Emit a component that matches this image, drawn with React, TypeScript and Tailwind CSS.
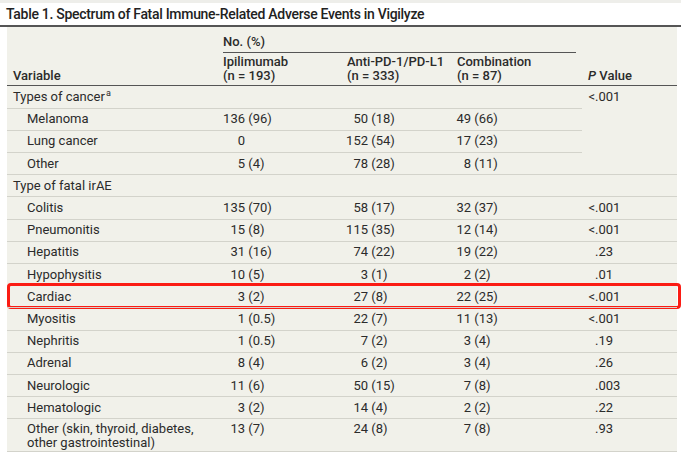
import React from "react";

type Row = {
  label: React.ReactNode;
  indent?: boolean;
  vals?: [string, string, string];
  p?: string;
  noPBorder?: boolean;
  highlight?: boolean;
  tall?: boolean;
};

const rows: Row[] = [
  {
    label: (
      <>
        Types of cancer<sup className="text-[9px] ml-[1px]">a</sup>
      </>
    ),
    p: "<.001",
  },
  { label: "Melanoma", indent: true, vals: ["136 (96)", "50 (18)", "49 (66)"], noPBorder: true },
  { label: "Lung cancer", indent: true, vals: ["0", "152 (54)", "17 (23)"], noPBorder: true },
  { label: "Other", indent: true, vals: ["5 (4)", "78 (28)", "8 (11)"], noPBorder: true },
  { label: "Type of fatal irAE" },
  { label: "Colitis", indent: true, vals: ["135 (70)", "58 (17)", "32 (37)"], p: "<.001" },
  { label: "Pneumonitis", indent: true, vals: ["15 (8)", "115 (35)", "12 (14)"], p: "<.001" },
  { label: "Hepatitis", indent: true, vals: ["31 (16)", "74 (22)", "19 (22)"], p: ".23" },
  { label: "Hypophysitis", indent: true, vals: ["10 (5)", "3 (1)", "2 (2)"], p: ".01" },
  { label: "Cardiac", indent: true, vals: ["3 (2)", "27 (8)", "22 (25)"], p: "<.001", highlight: true },
  { label: "Myositis", indent: true, vals: ["1 (0.5)", "22 (7)", "11 (13)"], p: "<.001" },
  { label: "Nephritis", indent: true, vals: ["1 (0.5)", "7 (2)", "3 (4)"], p: ".19" },
  { label: "Adrenal", indent: true, vals: ["8 (4)", "6 (2)", "3 (4)"], p: ".26" },
  { label: "Neurologic", indent: true, vals: ["11 (6)", "50 (15)", "7 (8)"], p: ".003" },
  { label: "Hematologic", indent: true, vals: ["3 (2)", "14 (4)", "2 (2)"], p: ".22" },
  {
    label: (
      <>
        Other (skin, thyroid, diabetes,
        <br />
        other gastrointestinal)
      </>
    ),
    indent: true,
    vals: ["13 (7)", "24 (8)", "7 (8)"],
    p: ".93",
    tall: true,
  },
];

const numW = ["w-[28px]", "w-[27px]", "w-[20px]"];

function Num({ v, i }: { v: string; i: number }) {
  const idx = v.indexOf(" ");
  const n = idx === -1 ? v : v.slice(0, idx);
  const rest = idx === -1 ? "" : v.slice(idx);
  return (
    <span className="flex whitespace-pre">
      <span className={`${numW[i]} text-right`}>{n}</span>
      <span>{rest}</span>
    </span>
  );
}

function PVal({ v }: { v: string }) {
  const idx = v.indexOf(".");
  return (
    <span className="flex whitespace-pre">
      <span className="w-[13px] text-right">{v.slice(0, idx)}</span>
      <span>{v.slice(idx)}</span>
    </span>
  );
}

const grid = "grid grid-cols-[210px_124px_110px_131px_95px]";

export default function App() {
  return (
    <div
      className="w-[681px] h-[456px] bg-white text-[#2b2b2b] overflow-hidden"
      style={{ fontFamily: "Roboto, 'Liberation Sans', sans-serif" }}
    >
      <div className="h-[3px] bg-[#eeeeea]" />
      <div className="h-[22px] pl-[6px] flex items-center text-[14px] font-medium text-[#222222] tracking-[-0.3px]">
        Table 1. Spectrum of Fatal Immune-Related Adverse Events in Vigilyze
      </div>
      <div className="h-[1.5px] bg-[#555555]" />
      <div className="ml-[7px] w-[670px] bg-[#f1f1ea] text-[13px] leading-[14px]">
        {/* header */}
        <div className={`${grid} grid-rows-[26px_32px] font-medium border-b border-[#555555]`}>
          <div className="row-span-2 self-end pl-[6px] pb-[2px]">Variable</div>
          <div className="col-span-3 mx-[6px] border-b border-[#555555] pt-[8px]">No. (%)</div>
          <div className="row-span-2 col-start-5 row-start-1 self-end pl-[6px] pb-[2px]">
            <span className="italic">P</span> Value
          </div>
          <div className="pl-[6px] pt-[2px]">
            Ipilimumab
            <br />
            (n = 193)
          </div>
          <div className="pl-[6px] pt-[2px]">
            Anti-PD-1/PD-L1
            <br />
            (n = 333)
          </div>
          <div className="pl-[6px] pt-[2px]">
            Combination
            <br />
            (n = 87)
          </div>
        </div>
        {/* body */}
        {rows.map((r, ri) => {
          const bt = ri === 0 ? "" : "border-t border-[#d3d3cb]";
          const align = r.tall ? "items-start pt-[3px]" : "items-center";
          return (
            <div
              key={ri}
              className={`${grid} relative ${r.tall ? "h-[33.5px] border-b border-[#d3d3cb]" : "h-[22.2px]"}`}
            >
              <div className={`${bt} flex ${align} ${r.indent ? "pl-[20px]" : "pl-[6px]"}`}>
                <span>{r.label}</span>
              </div>
              {[0, 1, 2].map((i) => (
                <div key={i} className={`${bt} flex ${align}`}>
                  {r.vals ? <Num v={r.vals[i]} i={i} /> : null}
                </div>
              ))}
              <div className={`${r.noPBorder ? "" : bt} flex ${align}`}>
                {r.p ? <PVal v={r.p} /> : null}
              </div>
              {r.highlight ? (
                <div className="absolute left-0 right-[-4px] top-[-2px] bottom-[-2px] border-[3px] border-[#fb1c14] rounded-[4px]" />
              ) : null}
            </div>
          );
        })}
      </div>
    </div>
  );
}
